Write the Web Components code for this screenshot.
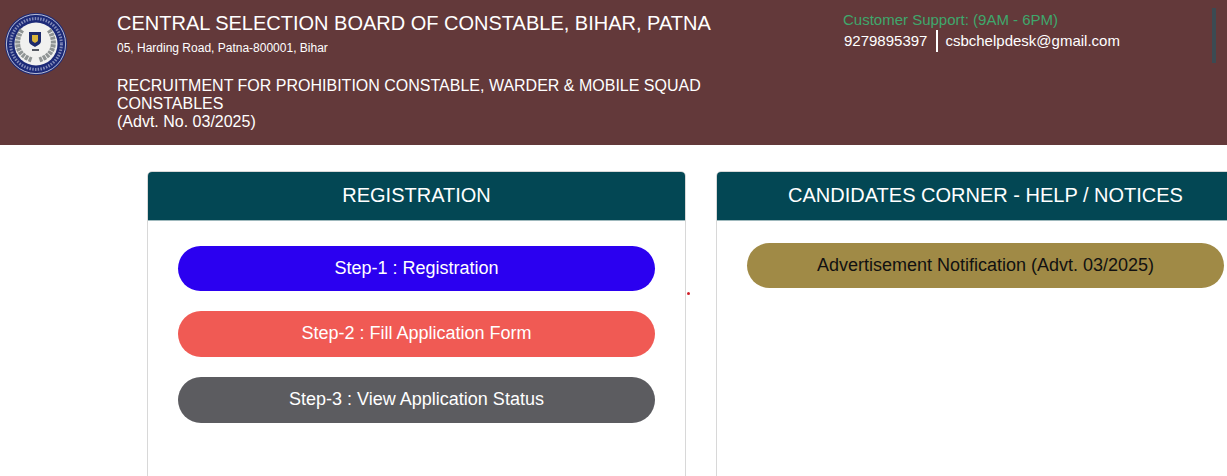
<!DOCTYPE html>
<html>
<head>
<meta charset="utf-8">
<title>CSBC</title>
<style>
	html, body { margin: 0; padding: 0; background: #fff; overflow: hidden; }
	body { font-family: "Liberation Sans", Arial, sans-serif; width: 1227px; height: 476px; }
</style>
</head>
<body>
<site-header></site-header>
<main-area>
	<info-panel heading="REGISTRATION" top="25">
		<step-button color="#2b00f0">Step-1 : Registration</step-button>
		<step-button color="#f05a54" tall>Step-2 : Fill Application Form</step-button>
		<step-button color="#5c5c60" tall>Step-3 : View Application Status</step-button>
	</info-panel>
	<info-panel heading="CANDIDATES CORNER - HELP / NOTICES" top="22">
		<step-button color="#a08a46" text="#111">Advertisement Notification (Advt. 03/2025)</step-button>
	</info-panel>
</main-area>

<script>
class CsbLogo extends HTMLElement {
	constructor() {
		super();
		const shadow = this.attachShadow({mode: 'open'});
		shadow.innerHTML = `
		<style>
			:host { display: block; width: 62px; height: 62px; }
			svg { display: block; }
		</style>
		<svg width="62" height="62" viewBox="0 0 62 62">
			<circle cx="31" cy="31" r="31" fill="#1c2a78"/>
			<circle cx="31" cy="31" r="29.6" fill="none" stroke="#dfe3ee" stroke-width="0.8"/>
			<circle cx="31" cy="31" r="25.4" fill="none" stroke="#c9cfe4" stroke-width="3" stroke-dasharray="1.5 1.3" opacity=".6"/>
			<circle cx="31" cy="31" r="21.5" fill="#f1f1ef"/>
			<path d="M17 17c-6 8-6 19 1 25 2 2 6 4 9 5" fill="none" stroke="#8f9494" stroke-width="5" stroke-dasharray="3 .8"/>
			<path d="M44 17c6 8 6 19-1 25-2 2-6 4-9 5" fill="none" stroke="#8f9494" stroke-width="5" stroke-dasharray="3 .8"/>
			<path d="M24 19h12v9c0 3-3 4-6 6-3-2-6-3-6-6z" fill="#1d2a6b"/>
			<path d="M27 22h6v5c0 1.500-1.500 2-3 3-1.500-1-3-1.500-3-3z" fill="#d9b53a"/>
			<rect x="27" y="36" width="7" height="2" fill="#565a62"/>
		</svg>`;
	}
}

class SiteHeader extends HTMLElement {
	constructor() {
		super();
		const shadow = this.attachShadow({mode: 'open'});
		shadow.innerHTML = `
		<style>
			:host { display: flex; height: 145px; background: #63393a; color: #fff; overflow: hidden; }
			csb-logo { margin: 13px 0 0 5px; flex: none; }
			.title { width: 597px; margin-left: 50px; padding-top: 11px; flex: none; }
			h1 { margin: 0; font-size: 20px; font-weight: 400; line-height: 24px; white-space: nowrap; }
			.addr { font-size: 12px; line-height: 14px; margin-top: 6px; }
			.recruit { font-size: 16px; line-height: 18px; margin-top: 22px; }
			.support { margin-left: 129px; padding-top: 11px; font-size: 15px; width: 369px; flex: none; }
			.hours { color: #3fa76c; line-height: 18px; }
			.contact { display: flex; align-items: center; height: 23px; padding-left: 1px; }
			.contact span + span { border-left: 2px solid #fff; margin-left: 9px; padding-left: 7px; line-height: 22px; }
			.bar { width: 4px; height: 55px; margin: 8px 0 0 0; background: #3b4a52; flex: none; }
		</style>
		<csb-logo></csb-logo>
		<div class="title">
			<h1>CENTRAL SELECTION BOARD OF CONSTABLE, BIHAR, PATNA</h1>
			<div class="addr">05, Harding Road, Patna-800001, Bihar</div>
			<div class="recruit">RECRUITMENT FOR PROHIBITION CONSTABLE, WARDER &amp; MOBILE SQUAD CONSTABLES<br>(Advt. No. 03/2025)</div>
		</div>
		<div class="support">
			<div class="hours">Customer Support: (9AM - 6PM)</div>
			<div class="contact"><span>9279895397</span><span>csbchelpdesk@gmail.com</span></div>
		</div>
		<div class="bar"></div>`;
	}
}

class MainArea extends HTMLElement {
	constructor() {
		super();
		const shadow = this.attachShadow({mode: 'open'});
		shadow.innerHTML = `
		<style>
			:host { display: grid; grid-template-columns: 539px 539px; column-gap: 30px; padding: 26px 0 0 147px; position: relative; height: 305px; overflow: hidden; }
			.dot { position: absolute; left: 687px; top: 147px; width: 3px; height: 3px; border-radius: 50%; background: #d0202a; }
		</style>
		<slot></slot>
		<div class="dot"></div>`;
	}
}

class InfoPanel extends HTMLElement {
	constructor() {
		super();
		const shadow = this.attachShadow({mode: 'open'});
		shadow.innerHTML = `
		<style>
			:host { display: block; height: 340px; box-sizing: border-box; border: 1px solid #d8d8d8; border-radius: 5px 5px 0 0; }
			.head { height: 49px; box-sizing: border-box; padding-bottom: 1px; background: #034754; border-bottom: 1px solid #9fb9bd; border-radius: 4px 4px 0 0; color: #fff; font-size: 20px; display: flex; align-items: center; justify-content: center; }
			.body { display: flex; flex-direction: column; gap: 20px; padding: 0 30px; }
		</style>
		<div class="head"></div>
		<div class="body"><slot></slot></div>`;
	}
	connectedCallback() {
		this.shadowRoot.querySelector('.head').textContent = this.getAttribute('heading');
		this.shadowRoot.querySelector('.body').style.paddingTop = this.getAttribute('top') + 'px';
	}
}

class StepButton extends HTMLElement {
	constructor() {
		super();
		const shadow = this.attachShadow({mode: 'open'});
		shadow.innerHTML = `
		<style>
			:host { display: flex; align-items: center; justify-content: center; box-sizing: border-box; height: 45px; font-size: 18px; border-radius: 23px; color: #fff; }
			:host([tall]) { height: 46px; padding-bottom: 1px; }
		</style>
		<slot></slot>`;
	}
	connectedCallback() {
		this.style.background = this.getAttribute('color');
		if (this.hasAttribute('text')) this.style.color = this.getAttribute('text');
	}
}

customElements.define('csb-logo', CsbLogo);
customElements.define('site-header', SiteHeader);
customElements.define('main-area', MainArea);
customElements.define('info-panel', InfoPanel);
customElements.define('step-button', StepButton);
</script>
</body>
</html>
